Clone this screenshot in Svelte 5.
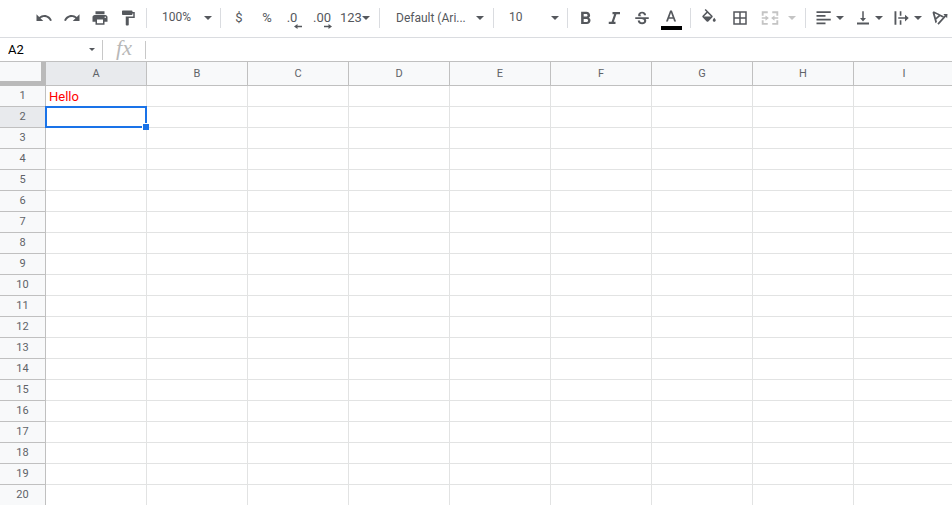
<script>
  const columns = ['A', 'B', 'C', 'D', 'E', 'F', 'G', 'H', 'I'];
  const rows = Array.from({ length: 20 }, (_, i) => i + 1);
  const cells = { A1: 'Hello' };
  let selected = $state({ col: 'A', row: 2 });
  let address = $derived(selected.col + selected.row);
  let formula = $derived(cells[address] ?? '');
</script>

{#snippet icon(path)}
  <svg class="icon" viewBox="0 0 24 24" aria-hidden="true"><path d={path} /></svg>
{/snippet}

{#snippet caret()}
  <svg class="caret" viewBox="0 0 8 4" aria-hidden="true"><path d="M0 0h8L4 4z" /></svg>
{/snippet}

<div class="app">
  <div class="toolbar" role="toolbar" aria-label="Formatting">
    <button aria-label="Undo">
      {@render icon('M12.5 8c-2.65 0-5.05.99-6.9 2.6L2 7v9h9l-3.62-3.62c1.39-1.16 3.16-1.88 5.12-1.88 3.54 0 6.55 2.31 7.6 5.5l2.37-.78C21.08 11.03 17.15 8 12.5 8z')}
    </button>
    <button aria-label="Redo">
      {@render icon('M18.4 10.6C16.55 8.99 14.15 8 11.5 8c-4.65 0-8.58 3.03-9.96 7.22L3.9 16c1.05-3.19 4.05-5.5 7.6-5.5 1.95 0 3.73.72 5.12 1.88L13 16h9V7l-3.6 3.6z')}
    </button>
    <button aria-label="Print">
      {@render icon('M19 8H5c-1.66 0-3 1.34-3 3v6h4v4h12v-4h4v-6c0-1.66-1.34-3-3-3zm-3 11H8v-5h8v5zm3-7c-.55 0-1-.45-1-1s.45-1 1-1 1 .45 1 1-.45 1-1 1zm-1-9H6v4h12V3z')}
    </button>
    <button aria-label="Paint format">
      {@render icon('M18 4V3c0-.55-.45-1-1-1H5c-.55 0-1 .45-1 1v4c0 .55.45 1 1 1h12c.55 0 1-.45 1-1V6h1v4H9v11c0 .55.45 1 1 1h2c.55 0 1-.45 1-1v-9h8V4h-3z')}
    </button>
    <span class="sep"></span>
    <label class="pick zoom">
      <select aria-label="Zoom"><option>100%</option><option>75%</option></select>
      {@render caret()}
    </label>
    <span class="sep"></span>
    <button aria-label="Format as currency">$</button>
    <button aria-label="Format as percent">%</button>
    <button class="decimal less" aria-label="Decrease decimal places">
      .0<svg class="arrow" viewBox="0 0 8 5" aria-hidden="true"><path d="M3.500 0v1.700H8v1.600H3.500V5L0 2.500z" /></svg>
    </button>
    <button class="decimal more" aria-label="Increase decimal places">
      .00<svg class="arrow" viewBox="0 0 8 5" aria-hidden="true"><path d="M4.500 0v1.700H0v1.600h4.500V5L8 2.500z" /></svg>
    </button>
    <button class="formats" aria-label="More formats">123{@render caret()}</button>
    <span class="sep"></span>
    <label class="pick font">
      <select aria-label="Font"><option>Default (Ari...</option><option>Roboto</option></select>
      {@render caret()}
    </label>
    <span class="sep"></span>
    <label class="pick size">
      <select aria-label="Font size"><option>10</option><option>11</option></select>
      {@render caret()}
    </label>
    <span class="sep"></span>
    <button aria-label="Bold">
      {@render icon('M15.600 11.800c1.100-.800 1.900-2 1.900-3.200C17.500 5.700 15.400 3.700 12.500 3.700H5.500V20h7.700c2.700 0 4.800-2.100 4.800-4.700 0-1.600-.900-2.900-2.400-3.500zM8.900 6.500h3.400c1 0 1.800.800 1.800 1.800s-.800 1.800-1.800 1.800H8.900V6.500zm3.900 10.700H8.900V13.200h3.900c1.100 0 2 .900 2 2s-.900 2-2 2z')}
    </button>
    <button aria-label="Italic">
      {@render icon('M10 4v3h2.210l-3.420 10H5v3h9v-3h-2.210l3.420-10H20V4z')}
    </button>
    <button aria-label="Strikethrough">
      {@render icon('M7.240 9.500C7 9 6.850 8.500 6.850 7.900c0-2.600 2.300-4.400 5.300-4.400 3.100 0 5.300 1.800 5.300 4.700h-2.900c0-1.500-.900-2.300-2.400-2.300-1.400 0-2.300.700-2.300 1.800 0 .800.500 1.300 1.600 1.800H7.240zM3 11h18v2.200h-4.100c.500.700.800 1.500.800 2.400 0 2.900-2.300 4.600-5.500 4.600-3.400 0-5.900-1.800-5.900-5h3c0 1.700 1.200 2.600 2.900 2.600 1.600 0 2.600-.700 2.600-1.900 0-1-.500-1.600-2.100-2.200L11.200 13.200H3z')}
    </button>
    <button class="color" aria-label="Text color">
      {@render icon('M10.800 2L5.300 16.500h2.600l1.200-3.400h5.900l1.200 3.400h2.600L13.200 2zM9.900 11L12 5l2.200 6z')}
      <span class="swatch"></span>
    </button>
    <span class="sep"></span>
    <button aria-label="Fill color">
      {@render icon('M16.560 8.940L7.620 0 6.210 1.410l2.380 2.380-5.150 5.150c-.59.59-.59 1.540 0 2.120l5.500 5.500c.29.29.68.44 1.060.44s.77-.15 1.060-.44l5.500-5.500c.59-.58.59-1.530 0-2.120zM5.210 10L10 5.210 14.790 10H5.210zM19 11.500s-2 2.170-2 3.500c0 1.100.9 2 2 2s2-.9 2-2c0-1.330-2-3.500-2-3.500z')}
    </button>
    <button class="borders" aria-label="Borders">
      {@render icon('M3 3v18h18V3H3zm8 16H5v-6h6v6zm0-8H5V5h6v6zm8 8h-6v-6h6v6zm0-8h-6V5h6v6z')}
    </button>
    <button class="split merge" aria-label="Merge cells" disabled>
      {@render icon('M1 3h8v2.500H3.500V9H1zM15 3h8v6h-2.500V5.500H15zM1 15h2.500v3.500H9V21H1zM20.500 15H23v6h-8v-2.500h5.500zM1 11h5V8.500l4.500 3.500L6 15.500V13H1zM23 11h-5V8.500L13.500 12l4.500 3.500V13h5z')}
      {@render caret()}
    </button>
    <span class="sep"></span>
    <button class="split" aria-label="Horizontal align">
      {@render icon('M2 3h19v2.200H2zM2 8h12v2.200H2zM2 13h19v2.200H2zM2 18h12v2.200H2z')}
      {@render caret()}
    </button>
    <button class="split" aria-label="Vertical align">
      {@render icon('M16 12h-3V3h-2v9H8l4 4.500zM4 18v2.500h16V18z')}
      {@render caret()}
    </button>
    <button class="split" aria-label="Text wrapping">
      {@render icon('M2 3h2.500v18H2zM9 3h2.200v6H9zM9 15h2.200v6H9zM7 11h9V7.500l5 4.500-5 4.500V13H7z')}
      {@render caret()}
    </button>
    <button class="rotate" aria-label="Text rotation">
      {@render icon('M2 4.500l4 14.500 2-1.700-.900-3.200 5.100-4.300 3 1.400 2-1.700L3.600 2.900zm2.900 1.400l5.200 2.500-3.600 3.100zM22 6.500l-5.500.300 1.700 1.900L8.500 19.300l1.700 1.600 9.600-10.500 1.700 1.800z')}
    </button>
  </div>

  <div class="formula-bar">
    <label class="name-box">
      <input aria-label="Name box" value={address} />
      <svg class="small caret" viewBox="0 0 6 3" aria-hidden="true"><path d="M0 0h6L3 3z" /></svg>
    </label>
    <label class="fx" for="formula">fx</label>
    <input id="formula" value={formula} />
  </div>

  <div class="grid">
    <table>
      <colgroup>
        <col class="row-head" />
        {#each columns as col (col)}<col class="data" />{/each}
      </colgroup>
      <thead>
        <tr>
          <td class="corner"></td>
          {#each columns as col (col)}
            <th scope="col" class:active={col === selected.col}>{col}</th>
          {/each}
        </tr>
      </thead>
      <tbody>
        {#each rows as row (row)}
          <tr>
            <th scope="row" class:active={row === selected.row}>{row}</th>
            {#each columns as col (col)}
              <td
                class:selected={col === selected.col && row === selected.row}
                onclick={() => (selected = { col, row })}>{cells[col + row] ?? ''}</td>
            {/each}
          </tr>
        {/each}
      </tbody>
    </table>
  </div>
</div>

<style>
  :global(body) {
    margin: 0;
  }

  .app {
    display: flex;
    flex-direction: column;
    height: 100vh;
    overflow: hidden;
    background: #fff;
    color: #55585d;
    font-family: Roboto, Arial, sans-serif;
    font-size: 12px;
  }

  .app * {
    box-sizing: border-box;
  }

  .toolbar {
    display: flex;
    flex: none;
    align-items: center;
    height: 38px;
    padding: 0 0 2px 30px;
    border-bottom: 1px solid #dadce0;
  }

  button {
    display: flex;
    flex: none;
    align-items: center;
    justify-content: center;
    position: relative;
    width: 28px;
    height: 26px;
    padding: 0;
    border: 0;
    background: none;
    color: inherit;
    font: 13px/16px Roboto, Arial, sans-serif;
  }

  button:disabled {
    color: #c4c4c4;
  }

  .icon {
    flex: none;
    width: 18px;
    height: 18px;
    fill: currentColor;
  }

  .caret {
    flex: none;
    width: 8px;
    height: 4px;
    fill: currentColor;
  }

  .small {
    width: 6px;
    height: 3px;
  }

  .sep {
    flex: none;
    width: 1px;
    height: 20px;
    margin: 0 4px;
    background: #dadce0;
  }

  .pick {
    display: flex;
    flex: none;
    align-items: center;
    height: 26px;
    padding: 0 5px 0 12px;
  }

  select {
    flex: 1;
    min-width: 0;
    padding: 0;
    border: 0;
    appearance: none;
    background: none;
    color: inherit;
    font: 12px/16px Roboto, Arial, sans-serif;
  }

  .zoom,
  .size {
    width: 65px;
    padding: 0 4px 0 11px;
  }

  .zoom select,
  .size select {
    padding-bottom: 2px;
  }

  .font {
    width: 105px;
  }

  .arrow {
    position: absolute;
    bottom: 2px;
    width: 8px;
    height: 5px;
    fill: currentColor;
  }

  .less {
    padding-right: 6px;
  }

  .less .arrow {
    right: 7px;
  }

  .more {
    padding-right: 2px;
  }

  .more .arrow {
    right: 5px;
  }

  .formats {
    justify-content: flex-start;
    width: 38px;
    padding-left: 3px;
  }

  .color {
    width: 30px;
  }

  .swatch {
    position: absolute;
    right: 4px;
    bottom: 1px;
    left: 5px;
    height: 4px;
    background: #000;
  }

  .borders {
    width: 34px;
  }

  .split {
    justify-content: space-between;
    width: 39px;
    padding: 0 5px;
  }

  .merge {
    width: 44px;
    padding-left: 4px;
  }

  .rotate {
    width: 26px;
  }

  .formula-bar {
    display: flex;
    flex: none;
    align-items: center;
    height: 24px;
    border-bottom: 1px solid #c0c0c0;
  }

  input {
    min-width: 0;
    padding: 0;
    border: 0;
    outline: 0;
    background: none;
    color: #000;
    font: 13px/18px Roboto, Arial, sans-serif;
  }

  .name-box {
    display: flex;
    align-items: center;
    width: 103px;
    height: 20px;
    padding: 0 7px 0 8px;
    border-right: 1px solid #c8c8c8;
  }

  .name-box input {
    flex: 1;
  }

  .fx {
    width: 42px;
    padding-bottom: 4px;
    color: #b8b8b8;
    font: italic 22px/20px "Liberation Serif", serif;
    text-align: center;
  }

  #formula {
    flex: 1;
    height: 18px;
    padding-left: 6px;
    border-left: 1px solid #c8c8c8;
  }

  .grid {
    flex: 1;
    min-height: 0;
    overflow: hidden;
  }

  table {
    width: 0;
    border-spacing: 0;
    table-layout: fixed;
  }

  .row-head {
    width: 46px;
  }

  .data {
    width: 101px;
  }

  th,
  td {
    height: 21px;
    padding: 0;
    border: solid #e2e3e3;
    border-width: 0 1px 1px 0;
    line-height: 18px;
  }

  th {
    border-color: #c0c0c0;
    background: #f8f9fa;
    color: #5f6368;
    font-size: 11px;
    font-weight: 400;
    text-align: center;
  }

  thead th {
    height: 24px;
  }

  .corner {
    height: 24px;
    border: solid #bababa;
    border-width: 0 5px 5px 0;
    background: #f8f9fa;
  }

  th.active {
    background: #e8eaed;
  }

  tbody td {
    padding: 2px 0 0 3px;
    color: #f00;
    font-size: 13px;
  }

  .selected {
    position: relative;
  }

  .selected::before {
    content: "";
    position: absolute;
    inset: -1px;
    border: 2px solid #1a73e8;
  }

  .selected::after {
    content: "";
    position: absolute;
    right: -3px;
    bottom: -3px;
    width: 6px;
    height: 6px;
    border: solid #fff;
    border-width: 1px 0 0 1px;
    background: #1a73e8;
    box-sizing: content-box;
  }
</style>
